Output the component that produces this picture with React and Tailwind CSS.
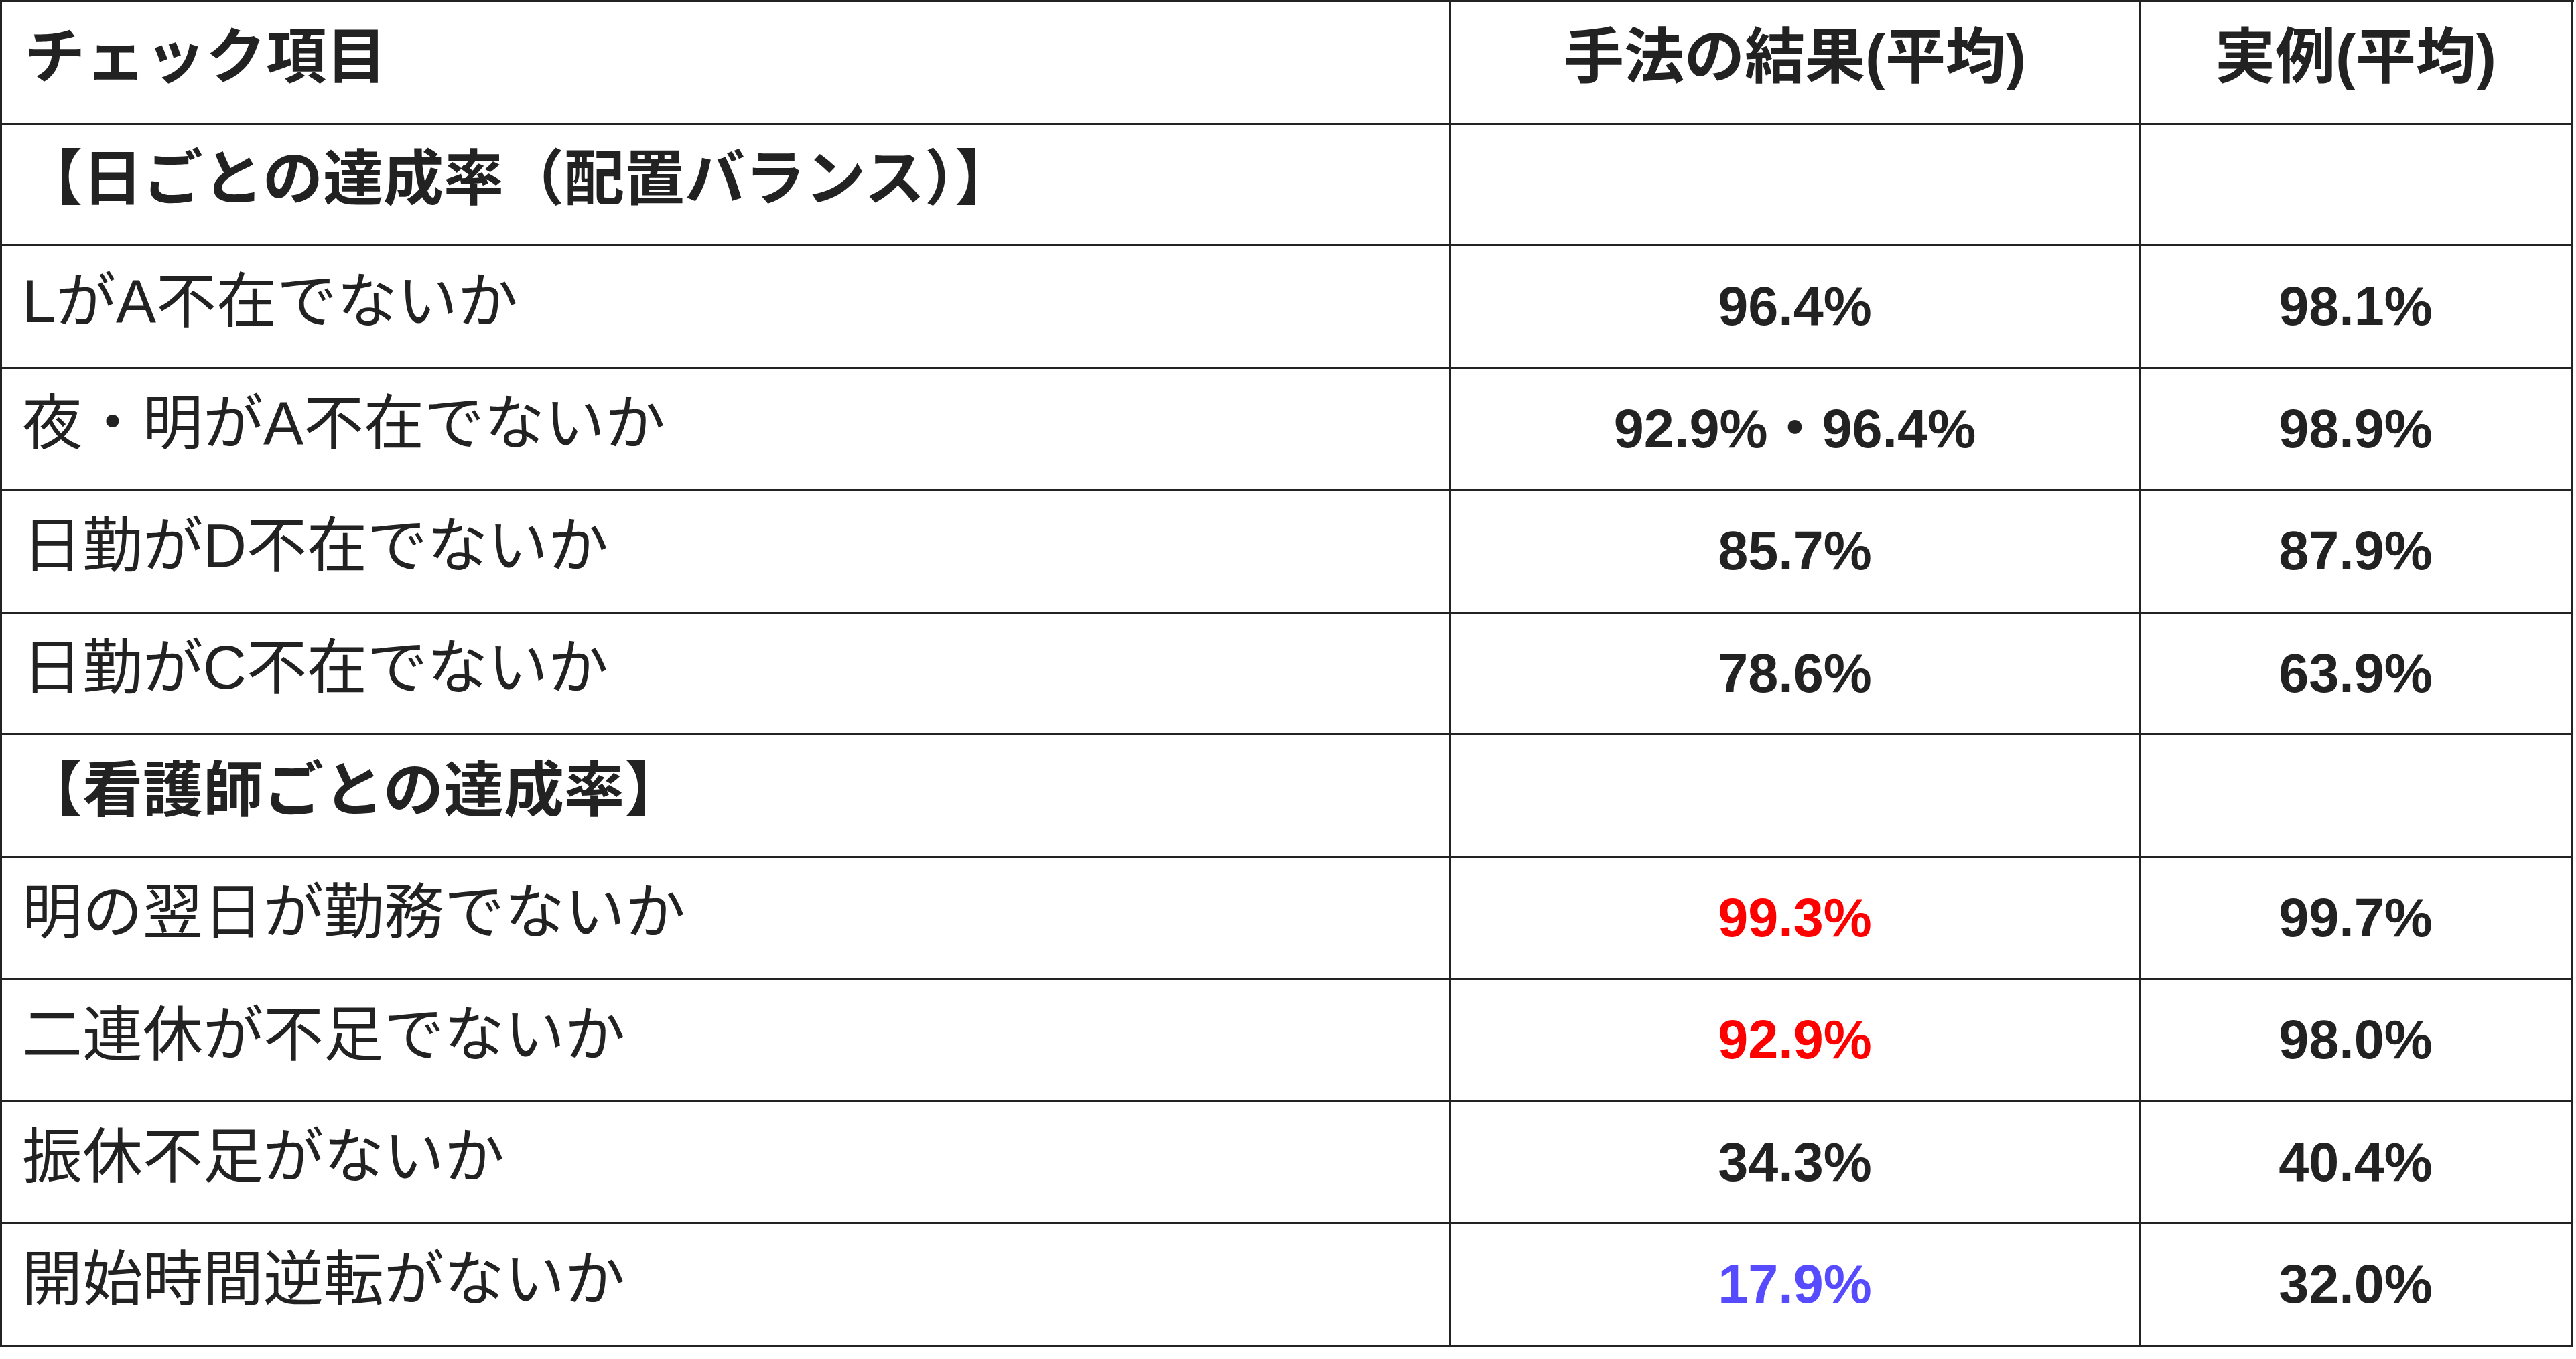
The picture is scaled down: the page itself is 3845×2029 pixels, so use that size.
const rows = [
  { label: '【日ごとの達成率（配置バランス）】', section: true },
  { label: 'LがA不在でないか', a: '96.4%', b: '98.1%' },
  { label: '夜・明がA不在でないか', a: '92.9%・96.4%', b: '98.9%' },
  { label: '日勤がD不在でないか', a: '85.7%', b: '87.9%' },
  { label: '日勤がC不在でないか', a: '78.6%', b: '63.9%' },
  { label: '【看護師ごとの達成率】', section: true },
  { label: '明の翌日が勤務でないか', a: '99.3%', b: '99.7%', aColor: 'text-[#ff0000]' },
  { label: '二連休が不足でないか', a: '92.9%', b: '98.0%', aColor: 'text-[#ff0000]' },
  { label: '振休不足がないか', a: '34.3%', b: '40.4%' },
  { label: '開始時間逆転がないか', a: '17.9%', b: '32.0%', aColor: 'text-[#574bff]' },
]

const cjk = "font-['Liberation_Sans','Noto_Sans_CJK_JP',sans-serif]"
const num = "font-['Liberation_Sans',sans-serif]"

function Cell({ children, className = '' }) {
  return (
    <div className={`h-[182.5px] border-r-[3px] border-b-[3px] border-[#232323] flex items-center ${className}`}>
      {children}
    </div>
  )
}

export default function App() {
  return (
    <div className="w-[3845px] h-[2029px] bg-white text-[#222]">
      <div className="w-[3842px] border-t-[3px] border-l-[3px] border-[#232323] grid grid-cols-[2163px_1029px_645px]">
        <Cell className="pl-[34px]">
          <span className={`${cjk} font-bold text-[90px] leading-none -mt-[16px]`}>チェック項目</span>
        </Cell>
        <Cell className="justify-center">
          <span className={`${cjk} font-bold text-[90px] leading-none -mt-[16px]`}>手法の結果(平均)</span>
        </Cell>
        <Cell className="justify-center">
          <span className={`${cjk} font-bold text-[90px] leading-none -mt-[16px]`}>実例(平均)</span>
        </Cell>

        {rows.map((r, i) => (
          <div key={i} className="contents">
            <Cell className="pl-[30px]">
              <span
                className={`${cjk} ${r.section ? 'font-bold' : 'font-normal'} text-[90px] leading-none -mt-[16px] whitespace-nowrap`}
              >
                {r.label}
              </span>
            </Cell>
            <Cell className="justify-center">
              {r.a && (
                <span className={`${num} font-bold text-[81px] leading-none ${r.aColor || ''}`}>
                  {r.a.includes('・') ? (
                    <>
                      92.9%<span className={`${cjk} font-bold`}>・</span>96.4%
                    </>
                  ) : (
                    r.a
                  )}
                </span>
              )}
            </Cell>
            <Cell className="justify-center">
              {r.b && <span className={`${num} font-bold text-[81px] leading-none`}>{r.b}</span>}
            </Cell>
          </div>
        ))}
      </div>
    </div>
  )
}
